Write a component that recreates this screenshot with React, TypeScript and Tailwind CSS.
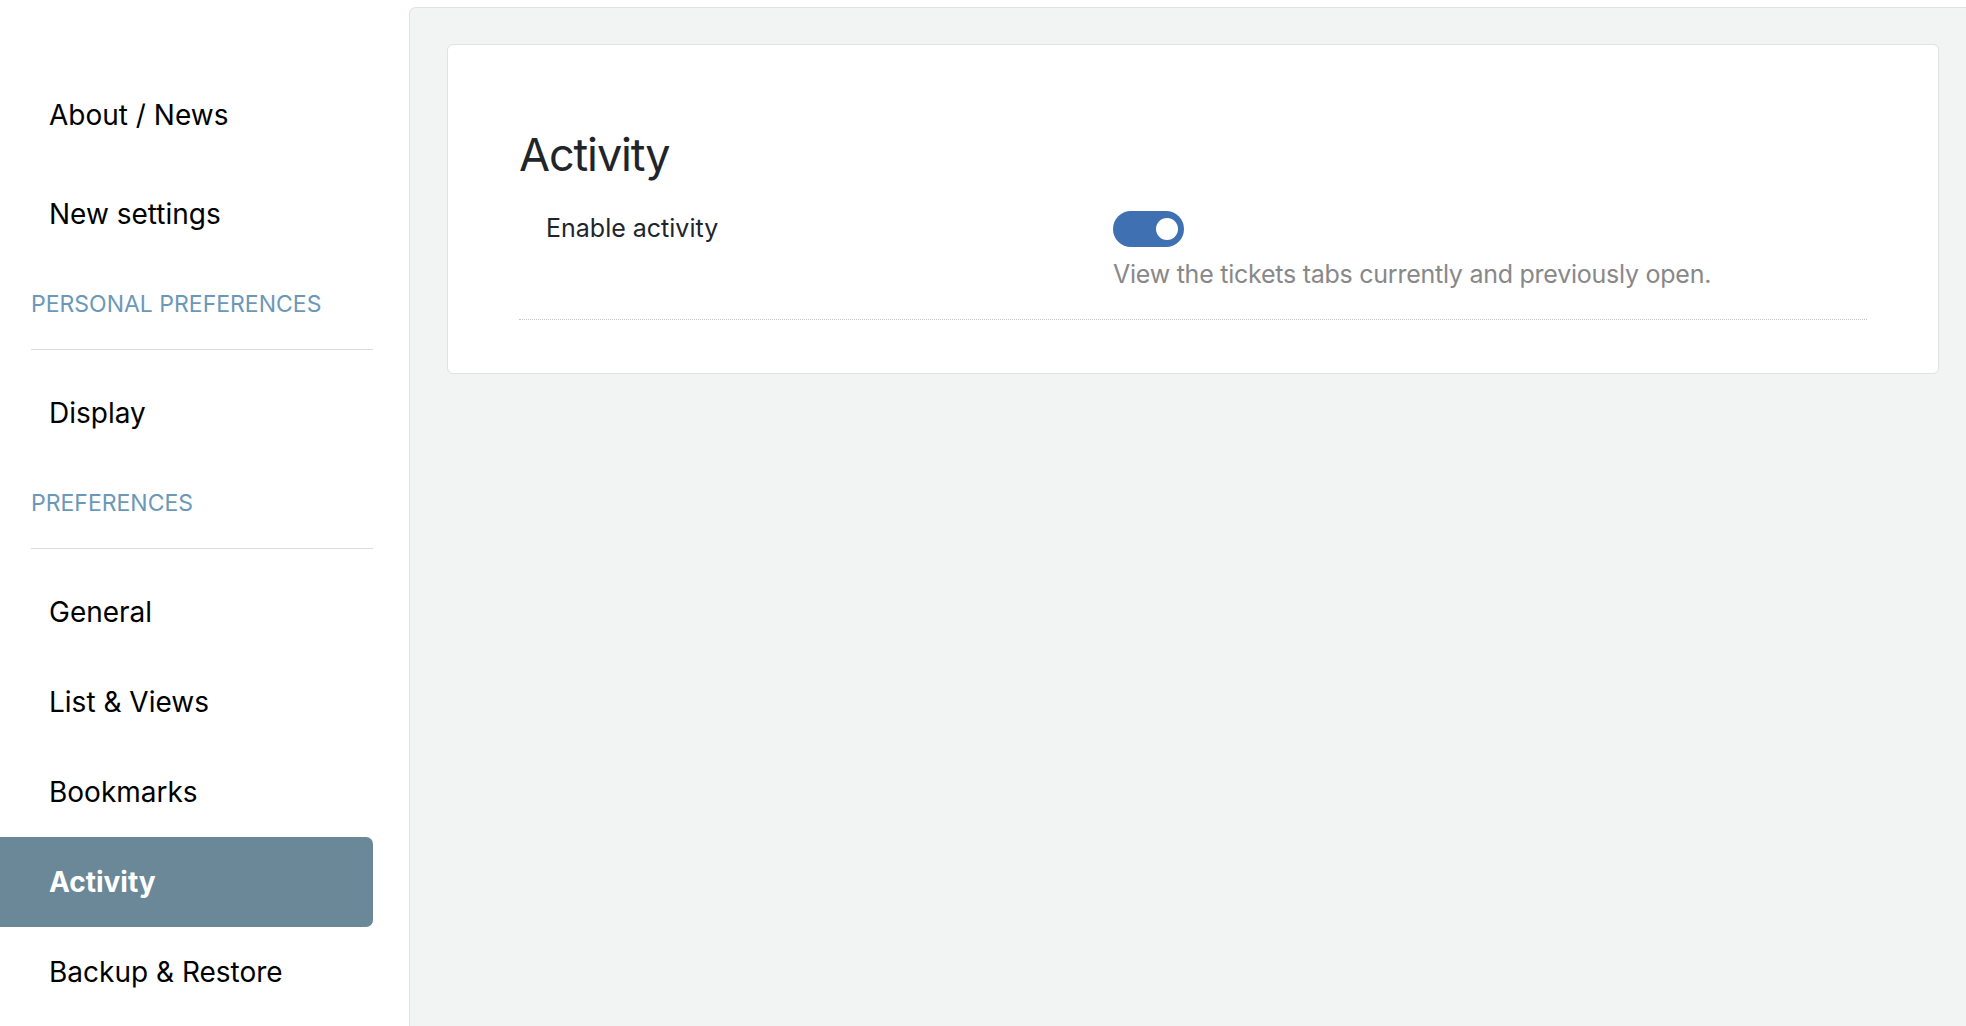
import React from "react";

type NavItem = { label: string; active?: boolean };

const groups: { title?: string; items: NavItem[] }[] = [
  { items: [{ label: "About / News" }] },
  { items: [{ label: "New settings" }] },
  { title: "Personal preferences", items: [{ label: "Display" }] },
  {
    title: "Preferences",
    items: [
      { label: "General" },
      { label: "List & Views" },
      { label: "Bookmarks" },
      { label: "Activity", active: true },
      { label: "Backup & Restore" },
    ],
  },
];

function SideLink({ label, active }: NavItem) {
  return (
    <div
      className={
        active
          ? "flex h-[90px] w-[373px] items-center rounded-r-[7px] bg-[#6a8898] pl-[49px] text-[28px] font-bold text-white"
          : "flex h-[90px] w-[373px] items-center pl-[49px] text-[28px] text-black"
      }
    >
      {label}
    </div>
  );
}

function Sidebar() {
  return (
    <aside className="w-[409px] shrink-0 bg-white pt-[70px]">
      {groups.map((g, i) => (
        <div key={i} className={i === 1 ? "mt-[9px]" : ""}>
          {g.title && (
            <div className="mb-[18px] ml-[31px] w-[342px] border-b border-[#dcdcdc] pt-[28px] pb-[28px] text-[23px] leading-[34px] text-[#6b98b8] uppercase">
              {g.title}
            </div>
          )}
          {g.items.map((it) => (
            <SideLink key={it.label} {...it} />
          ))}
        </div>
      ))}
    </aside>
  );
}

function Toggle() {
  return (
    <div className="flex h-[36px] w-[71px] items-center justify-end rounded-full bg-[#3e70b2] pr-[6px]">
      <div className="h-[22px] w-[22px] rounded-full bg-white" />
    </div>
  );
}

export default function App() {
  return (
    <div
      className="flex h-[1026px] w-full overflow-hidden bg-white"
      style={{ fontFamily: "Inter, 'Noto Sans', sans-serif" }}
    >
      <Sidebar />
      <main className="mt-[7px] flex-1 rounded-tl-[7px] border-t border-l border-[#dfe2e1] bg-[#f2f4f3] pt-[36px] pr-[27px] pl-[37px]">
        <section className="rounded-[6px] border border-[#dfe2e1] bg-white px-[71px] pt-[81px] pb-[53px]">
          <h1 className="text-[45px] leading-[58px] tracking-[-0.025em] text-[#212529]">Activity</h1>
          <div className="mt-[27px] flex border-b border-dotted border-[#c4c4c4] pb-[27px]">
            <div className="flex h-[36px] w-[594px] shrink-0 items-center pl-[27px] text-[25px] text-[#212529]">
              Enable activity
            </div>
            <div>
              <Toggle />
              <p className="mt-[9px] text-[25px] leading-[36px] tracking-[-0.01em] text-[#888888]">
                View the tickets tabs currently and previously open.
              </p>
            </div>
          </div>
        </section>
      </main>
    </div>
  );
}
